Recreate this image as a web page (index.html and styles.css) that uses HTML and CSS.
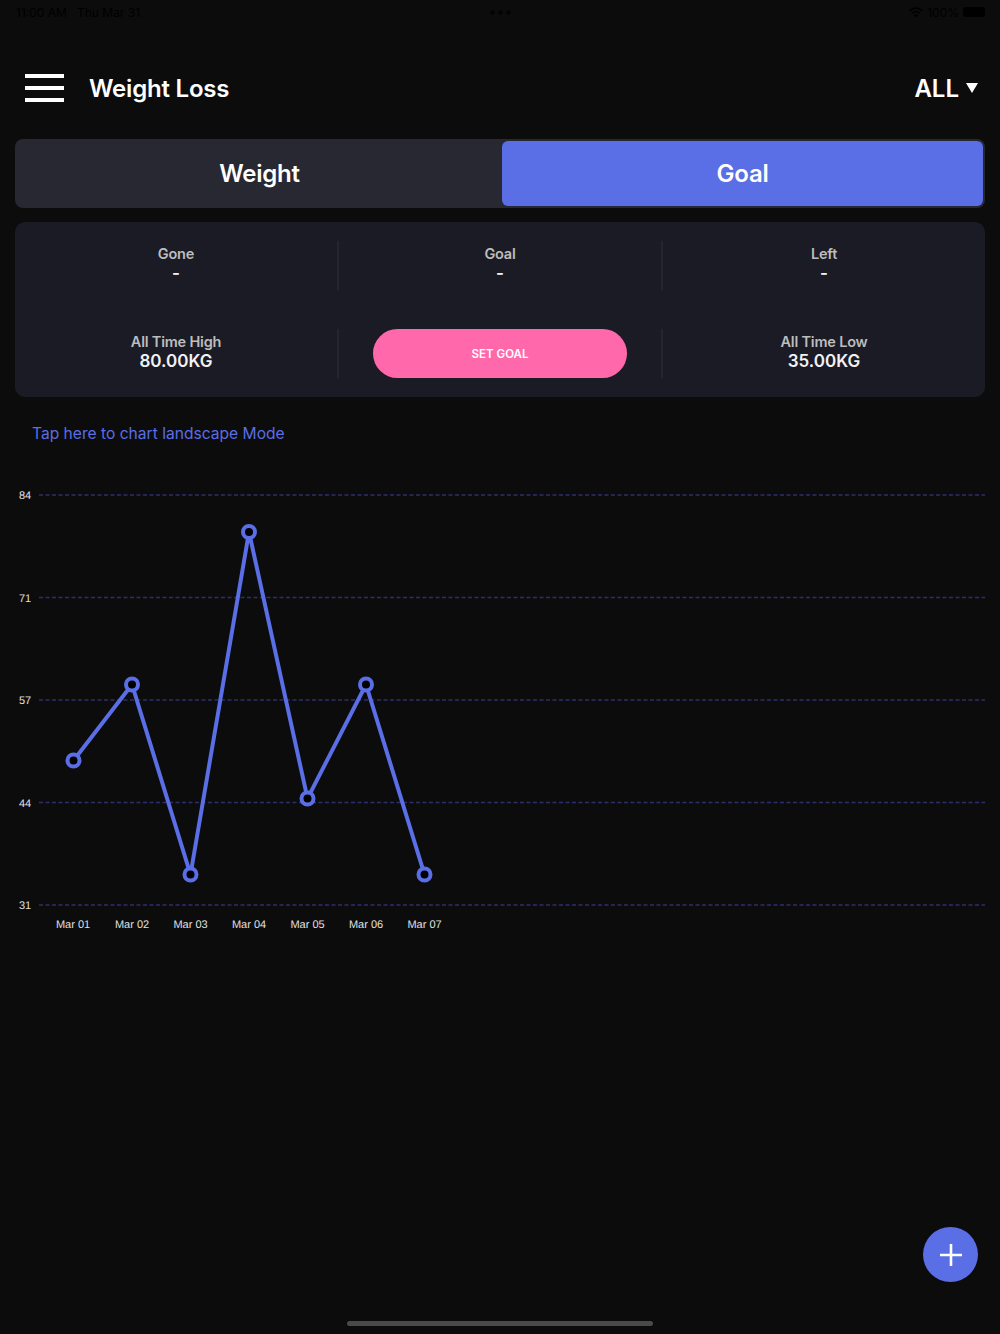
FILE: index.html
```html
<!DOCTYPE html>
<html lang="en">
<head>
<meta charset="utf-8">
<title>Weight Loss</title>
<link rel="stylesheet" href="styles.css">
</head>
<body>
<div class="screen">
  <div class="status">
    <span class="status-time">11:00 AM&nbsp;&nbsp;&nbsp;Thu Mar 31</span>
    <span class="status-dots"><i></i><i></i><i></i></span>
    <span class="status-right">
      <svg class="wifi" width="14" height="11" viewBox="0 0 14 11"><path d="M7 10.5 4.8 8a3.2 3.2 0 0 1 4.4 0zM3.6 6.8 2.4 5.5a6.8 6.8 0 0 1 9.2 0l-1.2 1.3a5 5 0 0 0-6.8 0zM1.2 4.3 0 3a10.2 10.2 0 0 1 14 0l-1.2 1.3a8.4 8.4 0 0 0-11.6 0z" fill="#000"/></svg>
      <span>100%</span>
      <span class="battery"></span>
    </span>
  </div>

  <header class="topbar">
    <button class="burger" aria-label="Menu"><i></i><i></i><i></i></button>
    <h1 class="title">Weight Loss</h1>
    <div class="range">ALL<span class="caret"></span></div>
  </header>

  <div class="tabs">
    <div class="tab">Weight</div>
    <div class="tab tab-active">Goal</div>
  </div>

  <section class="stats">
    <div class="stat"><span class="stat-label">Gone</span><span class="stat-value">-</span></div>
    <div class="stat stat-mid"><span class="stat-label">Goal</span><span class="stat-value">-</span></div>
    <div class="stat"><span class="stat-label">Left</span><span class="stat-value">-</span></div>
    <div class="stat"><span class="stat-label">All Time High</span><span class="stat-value">80.00KG</span></div>
    <div class="stat stat-mid"><button class="set-goal">SET GOAL</button></div>
    <div class="stat"><span class="stat-label">All Time Low</span><span class="stat-value">35.00KG</span></div>
  </section>

  <a class="landscape">Tap here to chart landscape Mode</a>

  <svg class="chart" width="1000" height="460" viewBox="0 480 1000 460">
    <g class="grid">
      <line x1="39" x2="985" y1="495" y2="495"/>
      <line x1="39" x2="985" y1="597.5" y2="597.5"/>
      <line x1="39" x2="985" y1="700" y2="700"/>
      <line x1="39" x2="985" y1="802.5" y2="802.5"/>
      <line x1="39" x2="985" y1="905" y2="905"/>
    </g>
    <g class="axis">
      <text x="19" y="499">84</text>
      <text x="19" y="601.5">71</text>
      <text x="19" y="704">57</text>
      <text x="19" y="806.5">44</text>
      <text x="19" y="909">31</text>
    </g>
    <g class="axis axis-x">
      <text x="73" y="928">Mar 01</text>
      <text x="132" y="928">Mar 02</text>
      <text x="190.500" y="928">Mar 03</text>
      <text x="249" y="928">Mar 04</text>
      <text x="307.500" y="928">Mar 05</text>
      <text x="366" y="928">Mar 06</text>
      <text x="424.500" y="928">Mar 07</text>
    </g>
    <polyline class="series" points="73.500,760.500 132,684.500 190.500,874.500 249,532 307.500,798.500 366,684.500 424.500,874.500"/>
    <g class="dots">
      <circle cx="73.500" cy="760.500" r="6"/>
      <circle cx="132" cy="684.500" r="6"/>
      <circle cx="190.500" cy="874.500" r="6"/>
      <circle cx="249" cy="532" r="6"/>
      <circle cx="307.500" cy="798.500" r="6"/>
      <circle cx="366" cy="684.500" r="6"/>
      <circle cx="424.500" cy="874.500" r="6"/>
    </g>
  </svg>

  <button class="fab" aria-label="Add">
    <svg width="24" height="24" viewBox="0 0 24 24"><path d="M1 12h22M12 1v22" stroke="#fff" stroke-width="2.600" fill="none"/></svg>
  </button>
  <div class="home-bar"></div>
</div>
</body>
</html>
```
FILE: styles.css
```css
* { box-sizing: border-box; }
html, body { margin: 0; padding: 0; background: #0c0c0d; }
body { font-family: "Inter", "Noto Sans", sans-serif; color: #fff; }
.screen {
  position: relative;
  width: 1000px;
  height: 1334px;
  overflow: hidden;
  display: flex;
  flex-direction: column;
  background: #0c0c0d;
}

.status {
  height: 24px;
  padding: 0 15px 0 16px;
  display: grid;
  grid-template-columns: 1fr auto 1fr;
  align-items: center;
  font-size: 12px;
  color: #000;
}
.status-dots { display: flex; gap: 3px; }
.status-dots i { width: 5px; height: 5px; border-radius: 50%; background: #000; opacity: .6; }
.status-right { display: flex; align-items: center; justify-content: flex-end; gap: 4px; }
.battery { width: 22px; height: 10px; border-radius: 3px; background: #000; }

.topbar {
  height: 115px;
  padding: 13px 22px 0 25px;
  display: flex;
  align-items: center;
}
.burger {
  width: 39px;
  height: 28px;
  padding: 0;
  margin: 0;
  border: 0;
  background: none;
  display: flex;
  flex-direction: column;
  justify-content: space-between;
}
.burger i { display: block; height: 4px; width: 100%; background: #fff; }
.title { margin: 0 0 0 25px; font-size: 24px; font-weight: 600; flex: 1; letter-spacing: -0.2px; }
.range { display: flex; align-items: center; gap: 7px; font-size: 24px; font-weight: 600; }
.caret {
  width: 0;
  height: 0;
  border-left: 6px solid transparent;
  border-right: 6px solid transparent;
  border-top: 10px solid #fff;
}

.tabs {
  margin: 0 15px;
  height: 69px;
  padding: 2px;
  border-radius: 8px;
  background: #282833;
  display: grid;
  grid-template-columns: 485px 481px;
}
.tab {
  display: flex;
  align-items: center;
  justify-content: center;
  font-size: 24px;
  font-weight: 600;
  letter-spacing: -0.2px;
  border-radius: 6px;
}
.tab-active { background: #5a6ee6; }

.stats {
  margin: 14px 15px 0;
  height: 175px;
  padding: 19px 0;
  border-radius: 10px;
  background: #1b1b26;
  display: grid;
  grid-template-columns: 322px 326px 322px;
  grid-template-rows: 49px 49px;
  row-gap: 39px;
}
.stat {
  display: flex;
  flex-direction: column;
  align-items: center;
  font-weight: 600;
  padding-top: 3px;
}
.stat-mid {
  border-left: 2px solid #252530;
  border-right: 2px solid #252530;
}
.stat-label { font-size: 14.5px; line-height: 19px; color: #bdbdbd; letter-spacing: -0.2px; }
.stat-value { font-size: 17px; line-height: 20px; color: #f2f2f2; }
.set-goal {
  width: 254px;
  height: 49px;
  margin-top: -3px;
  border: 0;
  border-radius: 25px;
  background: #ff69ac;
  color: #fff;
  font-family: inherit;
  font-size: 11.5px;
  font-weight: 600;
}

.landscape {
  margin: 27px 0 0 32px;
  font-size: 15.6px;
  line-height: 20px;
  color: #5a6ee6;
}

.chart { display: block; margin-top: 36px; flex: none; }
.grid line { stroke: #2e2e6c; stroke-width: 1.3; stroke-dasharray: 4 2.5; }
.axis text { font-family: "Liberation Sans", sans-serif; font-size: 11px; fill: #e0e0e0; text-rendering: geometricPrecision; }
.axis-x text { text-anchor: middle; }
.series { fill: none; stroke: #5a6ee6; stroke-width: 4; }
.dots circle { fill: #000; stroke: #5a6ee6; stroke-width: 4; }

.fab {
  position: absolute;
  left: 923px;
  top: 1227px;
  width: 55px;
  height: 55px;
  padding: 0;
  border: 0;
  border-radius: 50%;
  background: #5a6ee6;
  display: flex;
  align-items: center;
  justify-content: center;
}
.home-bar {
  position: absolute;
  left: 347px;
  top: 1321px;
  width: 306px;
  height: 5px;
  border-radius: 3px;
  background: #4a4a4a;
}
```
